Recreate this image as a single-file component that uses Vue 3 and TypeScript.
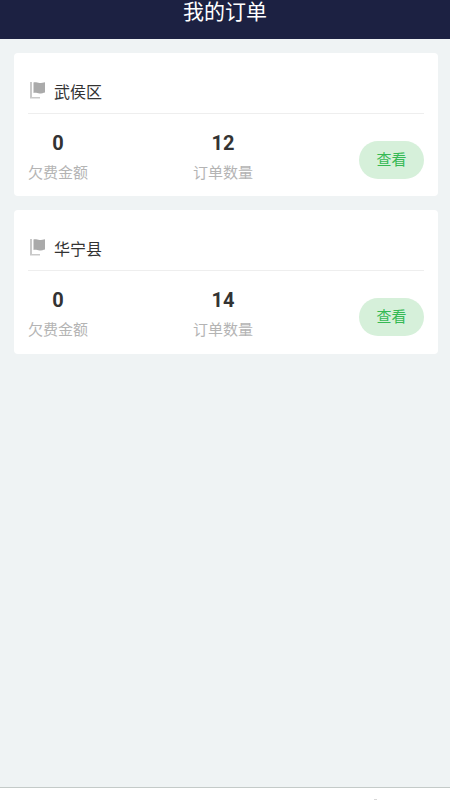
<script setup lang="ts">
interface Order {
  name: string
  debt: number
  count: number
}
const orders: Order[] = [
  { name: '武侯区', debt: 0, count: 12 },
  { name: '华宁县', debt: 0, count: 14 },
]
</script>

<template>
  <div class="page">
    <header class="top">
      <h1 class="title">我的订单</h1>
    </header>
    <main class="list">
      <section v-for="o in orders" :key="o.name" class="card">
        <div class="head">
          <svg class="flag" width="16" height="17" viewBox="0 0 16 17" aria-hidden="true">
            <path d="M0 0H2V15H10V16.500H0Z" fill="#c9c9c9" />
            <path d="M3.500 0.500C6 0 7.500 1 9.500 1C11.500 1 13.500 0.700 15 0.200V10.500C13.500 11 11.500 11.500 9.500 11.500C7.500 11.500 6 10.500 3.500 11Z" fill="#aaaaaa" />
          </svg>
          <span class="name">{{ o.name }}</span>
        </div>
        <div class="body">
          <div class="stat">
            <div class="num">{{ o.debt }}</div>
            <div class="label">欠费金额</div>
          </div>
          <div class="stat">
            <div class="num">{{ o.count }}</div>
            <div class="label">订单数量</div>
          </div>
          <button class="view" type="button">查看</button>
        </div>
      </section>
    </main>
    <footer class="bottom"><span class="dash"></span></footer>
  </div>
</template>

<style>
html, body {
  margin: 0;
  background: #eff3f4;
}
</style>

<style scoped>
.page {
  height: 800px;
  display: flex;
  flex-direction: column;
  background: #eff3f4;
  font-family: "Liberation Sans", "Noto Sans CJK SC", sans-serif;
  overflow: hidden;
}
.top {
  height: 39px;
  flex: none;
  background: #1c2142;
  overflow: hidden;
  display: flex;
  justify-content: center;
}
.title {
  margin: -4px 0 0;
  font-size: 21px;
  line-height: 29px;
  font-weight: 400;
  color: #fff;
  font-family: "Noto Sans CJK SC", sans-serif;
}
.list {
  flex: 1;
  padding: 14px 12px 0 14px;
  display: flex;
  flex-direction: column;
  gap: 14px;
}
.card {
  height: 143.33px;
  box-sizing: border-box;
  background: #fff;
  border-radius: 4px;
  padding: 0 14px;
}
.head {
  height: 61px;
  box-sizing: border-box;
  border-bottom: 1px solid #eeeeee;
  display: flex;
  align-items: center;
  padding: 15px 0 0 2px;
  gap: 8px;
}
.flag {
  flex: none;
}
.name {
  font-size: 16px;
  color: #333;
  font-family: "Noto Sans CJK SC", sans-serif;
}
.body {
  display: flex;
  align-items: flex-start;
  gap: 105px;
  padding-top: 15px;
}
.stat {
  width: 60px;
  text-align: center;
}
.num {
  font-family: Roboto, sans-serif;
  font-size: 20px;
  line-height: 28px;
  font-weight: 700;
  color: #333;
}
.label {
  font-size: 15px;
  line-height: 30px;
  color: #b4b4b4;
  font-family: "Noto Sans CJK SC", sans-serif;
}
.view {
  margin: 12px 0 0 auto;
  box-sizing: border-box;
  width: 65px;
  height: 37.5px;
  border: 0;
  padding: 0 0 3px;
  border-radius: 19px;
  background: #d6f0da;
  color: #35b954;
  font-size: 15px;
  font-family: "Noto Sans CJK SC", sans-serif;
}
.bottom {
  height: 12px;
  flex: none;
  background: #fff;
  border-top: 1px solid #c4cac8;
  position: relative;
}
.dash {
  position: absolute;
  left: 374px;
  bottom: 0;
  width: 3px;
  height: 1px;
  background: #d8d8d8;
}
</style>
